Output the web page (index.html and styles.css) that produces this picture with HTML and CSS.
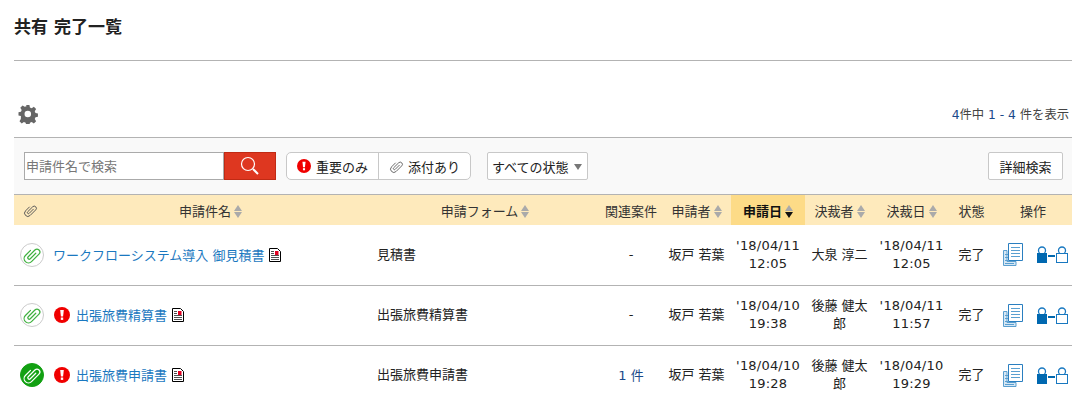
FILE: index.html
```html
<!DOCTYPE html>
<html lang="ja">
<head>
<meta charset="utf-8">
<title>共有 完了一覧</title>
<link rel="stylesheet" href="styles.css">
</head>
<body>
<svg class="defs" width="0" height="0" aria-hidden="true">
  <defs>
    <symbol id="clip" viewBox="-9 -9 18 18">
      <path transform="rotate(45) translate(.5 0)" d="M.8-3.5V3.500a1.300 1.300 0 0 1-2.600 0V-5a2.600 2.600 0 0 1 5.200 0V4.500a3.900 3.900 0 0 1-7.800 0V-2" fill="none" stroke="currentColor" stroke-width="1.100" stroke-linecap="round"/>
    </symbol>
    <symbol id="alert" viewBox="0 0 16 16">
      <circle cx="8" cy="8" r="8" fill="#f00000"/>
      <path d="M6.200 3h3.600l-.7 6.500H6.900z" fill="#fff"/>
      <rect x="6.800" y="10.500" width="2.400" height="2.400" fill="#fff"/>
    </symbol>
    <symbol id="doc" viewBox="0 0 12 14">
      <path d="M.5.500h8l3 3v10H.5z" fill="#fff" stroke="#000"/>
      <rect x="6" y="3" width="3.500" height="4" fill="#e00020"/>
      <path d="M2 3.500h3M2 5.500h3M2 7.500h8M2 9.500h8M2 11.500h8" stroke="#222" stroke-width=".8" fill="none"/>
    </symbol>
    <symbol id="copy" viewBox="0 0 20 23">
      <path d="M.5 7.500h3.500v11h9v4H.5z" fill="#d6e7f4" stroke="#5a9fd0"/>
      <path d="M2 11.500h3M2 14.500h3M2 17.500h3M2 20.500h9" stroke="#5a9fd0"/>
      <path d="M5.500.5h14v17h-14z" fill="#fff" stroke="#2a7fc0"/>
      <path d="M8 4.500h9M8 7.500h9M8 10.500h9M8 13.500h9" stroke="#5a9fd0"/>
    </symbol>
    <symbol id="locks" viewBox="0 0 32 17">
      <circle cx="5" cy="4.500" r="3.500" fill="#fff" stroke="#1878c0" stroke-width="1.300"/>
      <rect x="0" y="7" width="10" height="10" fill="#0068b0"/>
      <rect x="11" y="9" width="7" height="2" fill="#0068b0"/>
      <circle cx="25" cy="4.500" r="3.500" fill="#fff" stroke="#1878c0" stroke-width="1.300"/>
      <rect x="19.500" y="7.500" width="11" height="9" fill="#fff" stroke="#1878c0"/>
    </symbol>
  </defs>
</svg>
<main class="page">
  <h1 class="title">共有 完了一覧</h1>
  <div class="tools">
    <svg class="gear" viewBox="0 0 24 24"><path fill="#666" fill-rule="evenodd" d="M10 1h4l.6 3 2.200.9 2.600-1.700 2.800 2.800-1.700 2.600.9 2.200 3 .6v4l-3 .6-.9 2.200 1.700 2.600-2.800 2.800-2.600-1.700-2.200.9-.6 3h-4l-.6-3-2.200-.9-2.600 1.700-2.800-2.800 1.700-2.600L3.600 14.400l-3-.6v-4l3-.6.9-2.200L2.800 4.400 5.600 1.600l2.600 1.700 2.200-.9zM12 8a4 4 0 1 0 0 8 4 4 0 0 0 0-8z" transform="translate(0 .2) scale(.98)"/></svg>
    <p class="count"><span class="navy">4</span>件中 <span class="navy">1 - 4</span> 件を表示</p>
  </div>
  <div class="searchbar">
    <div class="search">
      <input class="search-input" type="text" placeholder="申請件名で検索">
      <button class="search-btn" type="button" aria-label="検索">
        <svg viewBox="0 0 20 20" width="20" height="20"><circle cx="8" cy="8" r="6.500" fill="none" stroke="#fff" stroke-width="1.200"/><path d="M13 13l5 5" stroke="#fff" stroke-width="2"/></svg>
      </button>
    </div>
    <div class="toggle">
      <span class="toggle-item"><svg class="ic16"><use href="#alert"/></svg>重要のみ</span>
      <span class="toggle-item"><svg class="ic-clip"><use href="#clip"/></svg>添付あり</span>
    </div>
    <div class="status">すべての状態<i class="caret"></i></div>
    <div class="detail">詳細検索</div>
  </div>
  <table class="list">
    <colgroup>
      <col class="c-clip"><col class="c-name"><col class="c-form"><col class="c-rel"><col class="c-user"><col class="c-date"><col class="c-user2"><col class="c-date2"><col class="c-state"><col class="c-op">
    </colgroup>
    <thead>
      <tr>
        <th><svg class="ic-clip dark"><use href="#clip"/></svg></th>
        <th class="th-name">申請件名<i class="sort"></i></th>
        <th>申請フォーム<i class="sort"></i></th>
        <th>関連案件</th>
        <th>申請者<i class="sort"></i></th>
        <th class="active">申請日<i class="sort down"></i></th>
        <th>決裁者<i class="sort"></i></th>
        <th>決裁日<i class="sort"></i></th>
        <th>状態</th>
        <th>操作</th>
      </tr>
    </thead>
    <tbody>
      <tr>
        <td><span class="badge"><svg class="ic-badge"><use href="#clip"/></svg></span></td>
        <td class="left"><a class="link" href="#">ワークフローシステム導入 御見積書</a><svg class="ic-doc"><use href="#doc"/></svg></td>
        <td class="left pad">見積書</td>
        <td>-</td>
        <td>坂戸 若葉</td>
        <td class="when">'18/04/11<br>12:05</td>
        <td>大泉 淳二</td>
        <td class="when">'18/04/11<br>12:05</td>
        <td>完了</td>
        <td class="ops"><svg class="ic-copy"><use href="#copy"/></svg><svg class="ic-locks"><use href="#locks"/></svg></td>
      </tr>
      <tr>
        <td><span class="badge"><svg class="ic-badge"><use href="#clip"/></svg></span></td>
        <td class="left"><svg class="ic16 gap"><use href="#alert"/></svg><a class="link" href="#">出張旅費精算書</a><svg class="ic-doc"><use href="#doc"/></svg></td>
        <td class="left pad">出張旅費精算書</td>
        <td>-</td>
        <td>坂戸 若葉</td>
        <td class="when">'18/04/10<br>19:38</td>
        <td>後藤 健太郎</td>
        <td class="when">'18/04/11<br>11:57</td>
        <td>完了</td>
        <td class="ops"><svg class="ic-copy"><use href="#copy"/></svg><svg class="ic-locks"><use href="#locks"/></svg></td>
      </tr>
      <tr>
        <td><span class="badge on"><svg class="ic-badge"><use href="#clip"/></svg></span></td>
        <td class="left"><svg class="ic16 gap"><use href="#alert"/></svg><a class="link" href="#">出張旅費申請書</a><svg class="ic-doc"><use href="#doc"/></svg></td>
        <td class="left pad">出張旅費申請書</td>
        <td><a class="link navy" href="#">1 件</a></td>
        <td>坂戸 若葉</td>
        <td class="when">'18/04/10<br>19:28</td>
        <td>後藤 健太郎</td>
        <td class="when">'18/04/10<br>19:29</td>
        <td>完了</td>
        <td class="ops"><svg class="ic-copy"><use href="#copy"/></svg><svg class="ic-locks"><use href="#locks"/></svg></td>
      </tr>
    </tbody>
  </table>
</main>
</body>
</html>
```

FILE: styles.css
```css
* { box-sizing: border-box; }
html, body { margin: 0; height: 403px; overflow: hidden; background: #fff; }
body {
  font-family: "DejaVu Sans", "Noto Sans CJK JP", sans-serif;
  font-size: 13px;
  color: #222;
}
.defs { position: absolute; }
.page { padding: 0 9px 0 14px; }
.title {
  margin: 0;
  height: 61px;
  padding-top: 15px;
  font-size: 17px;
  line-height: 24px;
  font-weight: 700;
  color: #222;
  border-bottom: 1px solid #b3b3b3;
}
.tools {
  display: flex;
  justify-content: space-between;
  align-items: center;
  height: 76px;
  padding: 29px 3px 0 4px;
}
.gear { width: 20px; height: 20px; }
.count { margin: 0; font-size: 12.300px; color: #444; }
.navy { color: #1a4a8a; }
.searchbar {
  display: flex;
  align-items: center;
  height: 58px;
  padding: 0 9px 0 10px;
  background: #f9f9f9;
  border-top: 1px solid #b3b3b3;
  border-bottom: 1px solid #b3b3b3;
}
.search { display: flex; height: 28px; }
.search-input {
  width: 200px;
  height: 28px;
  padding: 0 1px;
  border: 1px solid #aaa;
  border-radius: 0;
  background: #fff;
  font: inherit;
  outline: 0;
}
.search-input::placeholder { color: #777; opacity: 1; }
.search-btn {
  display: flex;
  align-items: center;
  justify-content: center;
  width: 52px;
  height: 28px;
  padding: 0;
  background: #de3720;
  border: 1px solid #c02a14;
}
.toggle {
  display: flex;
  height: 28px;
  margin-left: 10px;
  background: #fff;
  border: 1px solid #c8c8c8;
  border-radius: 5px;
}
.toggle-item {
  display: flex;
  align-items: center;
  gap: 5px;
  padding: 0 10px;
}
.toggle-item + .toggle-item { border-left: 1px solid #c8c8c8; }
.ic16 { width: 16px; height: 16px; flex: none; vertical-align: middle; }
.toggle .ic16 { width: 14px; height: 14px; }
.ic-clip { width: 15px; height: 15px; color: #666; flex: none; }
.toggle-item .ic-clip { margin-right: -1px; }
.ic-clip.dark { color: #555; vertical-align: middle; }
.status {
  display: flex;
  align-items: center;
  height: 28px;
  margin-left: 16px;
  padding: 0 5px 0 4px;
  background: #fff;
  border: 1px solid #c8c8c8;
  border-radius: 2px;
}
.caret {
  margin-left: 5px;
  margin-top: 2px;
  border: 4px solid transparent;
  border-top: 6px solid #777;
  border-bottom: 0;
}
.detail {
  display: flex;
  align-items: center;
  justify-content: center;
  width: 75px;
  height: 28px;
  margin-left: auto;
  background: #fff;
  border: 1px solid #c8c8c8;
  border-radius: 2px;
}
.list {
  width: 100%;
  table-layout: fixed;
  border-collapse: collapse;
}
.c-clip { width: 32px; }
.c-name { width: 324px; }
.c-form { width: 230px; }
.c-rel { width: 62px; }
.c-user { width: 69px; }
.c-date { width: 74px; }
.c-user2 { width: 69px; }
.c-date2 { width: 75px; }
.c-state { width: 45px; }
.c-op { width: 78px; }
thead tr { height: 30px; background: #feeabc; }
th {
  padding: 0;
  font-weight: 400;
  color: #333;
  text-align: center;
  white-space: nowrap;
}
th.th-name { padding-left: 5px; }
th.active { background: #fddb87; font-weight: 700; color: #111; }
.sort {
  display: inline-block;
  position: relative;
  width: 8px;
  height: 13px;
  margin-left: 3px;
  vertical-align: -2px;
}
.sort::before, .sort::after {
  content: "";
  position: absolute;
  left: 0;
  border: 4px solid transparent;
}
.sort::before { top: 0; border-top: 0; border-bottom: 6px solid #aaa; }
.sort::after { bottom: 0; border-bottom: 0; border-top: 6px solid #aaa; }
.sort.down::after { border-top-color: #111; }
tbody tr { height: 60px; border-bottom: 1px solid #b3b3b3; }
td {
  padding: 0 4px;
  line-height: 18px;
  color: #222;
  text-align: center;
}
td.when { letter-spacing: .2px; }
td.left { text-align: left; padding-left: 7px; white-space: nowrap; }
td.pad { padding-left: 7px; }
.badge {
  display: inline-flex;
  align-items: center;
  justify-content: center;
  width: 24px;
  height: 24px;
  margin: 0 0 0 2px;
  color: #3eb03e;
  background: #fff;
  border: 1px solid #ccc;
  border-radius: 50%;
  vertical-align: middle;
}
.badge.on { color: #fff; background: #12a012; border-color: #12a012; }
.ic-badge { width: 20px; height: 20px; }
.gap { margin: 0 6px 0 1px; }
.link { color: #1a78c0; text-decoration: none; vertical-align: middle; }
.link.navy { color: #1a4a8a; }
.ic-doc { width: 12px; height: 14px; margin-left: 5px; vertical-align: middle; }
.ops { padding: 0 0 0 6px; white-space: nowrap; }
.ic-copy { width: 20px; height: 23px; vertical-align: middle; margin-right: 14px; }
.ic-locks { width: 32px; height: 17px; vertical-align: middle; }
```
